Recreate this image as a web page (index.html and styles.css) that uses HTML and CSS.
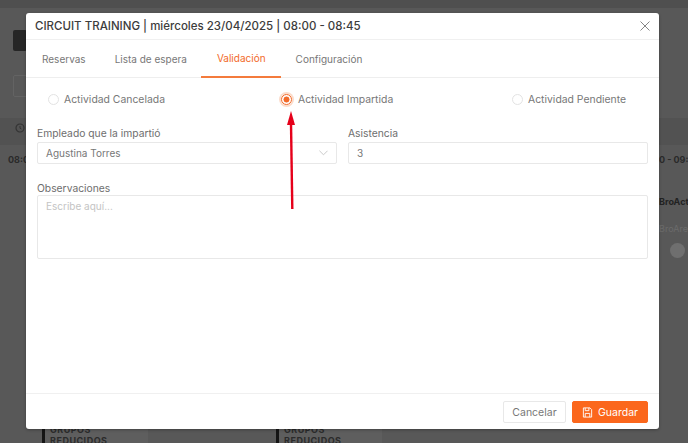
FILE: index.html
```html
<!DOCTYPE html>
<html lang="es">
<head>
<meta charset="utf-8">
<title>Validación</title>
<link rel="stylesheet" href="styles.css">
</head>
<body>
<div class="page">
  <div class="page-top"></div>
  <div class="page-bar"><span class="page-black"></span></div>
  <div class="page-filter"><span class="page-box"></span></div>
  <div class="page-head"><svg class="clock" viewBox="0 0 10 10" width="10" height="10"><circle cx="5" cy="5" r="4" fill="none" stroke="#333" stroke-width="1.2"/><path d="M5 3v2.2l1.4.8" fill="none" stroke="#333"/></svg></div>
  <div class="page-time"><span>08:0</span><span class="time-right">0 - 09:</span></div>
  <div class="page-card"><b>BroAct</b><span>BroAre</span><i class="dot"></i></div>
  <div class="page-bottom">
    <div class="tag">GRUPOS<br>REDUCIDOS</div>
    <div class="tag">GRUPOS<br>REDUCIDOS</div>
  </div>
</div>

<section class="modal">
  <header class="modal-head">
    <h1>CIRCUIT TRAINING | miércoles 23/04/2025 | 08:00 - 08:45</h1>
    <svg class="close" viewBox="0 0 10 10" width="10" height="10"><path d="M.5.5l9 9M9.500.5l-9 9" stroke="#777" stroke-width=".9" fill="none"/></svg>
  </header>
  <nav class="tabs">
    <a>Reservas</a>
    <a>Lista de espera</a>
    <a class="active">Validación</a>
    <a>Configuración</a>
  </nav>
  <div class="body">
    <div class="radios">
      <label class="radio"><i class="ring"></i>Actividad Cancelada</label>
      <label class="radio on"><i class="ring"></i>Actividad Impartida</label>
      <label class="radio"><i class="ring"></i>Actividad Pendiente</label>
    </div>
    <div class="row">
      <div class="field emp">
        <label>Empleado que la impartió</label>
        <div class="input">Agustina Torres
          <svg viewBox="0 0 10 6" width="9" height="6"><path d="M.5.5L5 5 9.500.5" fill="none" stroke="#c4c4c4"/></svg>
        </div>
      </div>
      <div class="field asi">
        <label>Asistencia</label>
        <div class="input">3</div>
      </div>
    </div>
    <div class="field obs">
      <label>Observaciones</label>
      <div class="input area">Escribe aquí...</div>
    </div>
  </div>
  <footer class="modal-foot">
    <button class="btn">Cancelar</button>
    <button class="btn primary">
      <svg viewBox="0 0 12 12" width="11" height="11"><path d="M1.500 1h7.200L10.500 2.800V11h-9zM3.500 1v3h4V1M3.500 11V7h5v4" fill="none" stroke="#fff" stroke-width="1"/></svg>
      Guardar
    </button>
  </footer>
</section>

<svg class="arrow" viewBox="0 0 16 100" width="16" height="100"><path d="M7 12L8.300 98" stroke="#e6001a" stroke-width="2.400" fill="none"/><path d="M7 0L11 14H3z" fill="#e6001a"/></svg>
</body>
</html>
```
FILE: styles.css
```css
* { box-sizing: border-box; }
html, body { margin: 0; height: 100%; }
body {
  position: relative;
  width: 688px;
  height: 443px;
  overflow: hidden;
  background: #585858;
  font-family: "Inter", "Open Sans", sans-serif;
  color: #666;
}
.page { height: 443px; display: flex; flex-direction: column; }
.page-top { height: 8px; background: #4f4f4f; flex: none; }
.page-bar { height: 38px; padding: 22px 0 0 13px; flex: none; }
.page-black { display: block; width: 14px; height: 21px; background: #262626; border-radius: 2px; }
.page-filter { height: 72px; padding-top: 29px; flex: none; }
.page-box { display: block; width: 20px; height: 22px; margin-left: 13px; border: 1px solid #636363; border-radius: 2px; }
.page-head { height: 27px; padding: 5px 0 0 15px; background: #525252; flex: none; }
.clock { display: block; }
.page-time { display: flex; justify-content: space-between; height: 39px; padding: 9px 0 0 8px; font-size: 9px; font-weight: 700; color: #2a2a2a; flex: none; }
.time-right { width: 29px; overflow: hidden; white-space: nowrap; }
.page-card { display: flex; flex-direction: column; align-items: flex-end; padding-top: 12px; font-size: 9px; color: #222; flex: none; }
.page-card b { width: 29px; overflow: hidden; }
.page-card span { width: 29px; margin-top: 16px; overflow: hidden; color: #6b6b6b; }
.dot { width: 15px; height: 15px; margin: 9px 3px 0 0; border-radius: 50%; background: #6f6f6f; }
.page-bottom { display: flex; gap: 128px; height: 19px; padding-left: 42px; margin-top: auto; flex: none; font-size: 9px; font-weight: 700; color: #2b2b2b; letter-spacing: .5px; line-height: 11px; }
.tag { width: 106px; white-space: nowrap; border-left: 3px solid #151515; padding-left: 5px; background: #5e5e5e; }

.modal {
  position: absolute;
  left: 26px;
  top: 13px;
  width: 633px;
  height: 416px;
  display: flex;
  flex-direction: column;
  background: #fff;
  border-radius: 3px;
  box-shadow: 0 1px 3px rgba(0,0,0,.3);
}
.modal-head {
  flex: none;
  height: 27px;
  padding: 0 9px;
  display: flex;
  align-items: center;
  justify-content: space-between;
  border-bottom: 1px solid #f0f0f0;
}
.modal-head h1 { margin: 0; font-size: 11.500px; font-weight: 500; color: #3c3c3c; white-space: nowrap; }
.tabs {
  flex: none;
  height: 38px;
  display: flex;
  padding-left: 1.500px;
  border-bottom: 1px solid #eee;
  font-size: 10px;
  color: #777;
}
.tabs a { padding: 0 14.500px; display: flex; align-items: center; height: 38px; }
.tabs .active { color: #f26a2a; border-bottom: 2px solid #f47b3c; padding: 0 15.500px; }
.body { flex: 1; padding: 0 11px; }
.radios { display: grid; grid-template-columns: 233px 231px 1fr; height: 42px; margin-bottom: 7px; padding-left: 11px; align-items: center; }
.radio { display: flex; align-items: center; gap: 5px; font-size: 10.400px; color: #777; white-space: nowrap; }
.ring { width: 11px; height: 11px; border-radius: 50%; border: 1px solid #e3e3e3; background: #fff; flex: none; }
.on .ring { border: 1px solid #f26a2a; background: radial-gradient(circle, #f26a2a 0 2.700px, #fff 3.300px); box-shadow: 0 0 0 2px #fbdccb; margin-right: 1px; }
.row { display: flex; gap: 11px; }
.field { display: flex; flex-direction: column; }
.field label { font-size: 10.300px; color: #6e6e6e; line-height: 13px; height: 15px; }
.emp { width: 300px; }
.asi { flex: 1; }
.input {
  height: 22px;
  border: 1px solid #e8e8e8;
  border-radius: 2px;
  padding: 0 8px;
  font-size: 10px;
  color: #777;
  display: flex;
  align-items: center;
  justify-content: space-between;
}
.obs { margin-top: 18px; }
.obs label { height: 13px; }
.area { height: 64px; align-items: flex-start; padding-top: 4px; color: #c4c4c4; }
.modal-foot {
  flex: none;
  height: 36px;
  padding: 7px 11px 0 0;
  display: flex;
  justify-content: flex-end;
  gap: 6px;
  border-top: 1px solid #f0f0f0;
}
.btn {
  height: 22px;
  width: 63px;
  background: #fff;
  border: 1px solid #e8e8e8;
  border-radius: 2px;
  font: 10.500px "Inter", sans-serif;
  color: #777;
  padding: 0;
}
.primary { width: 76px; background: #fb671c; border-color: #fb671c; color: #fff; display: flex; align-items: center; justify-content: center; gap: 5px; }
.arrow { position: absolute; left: 284px; top: 111px; }
```
